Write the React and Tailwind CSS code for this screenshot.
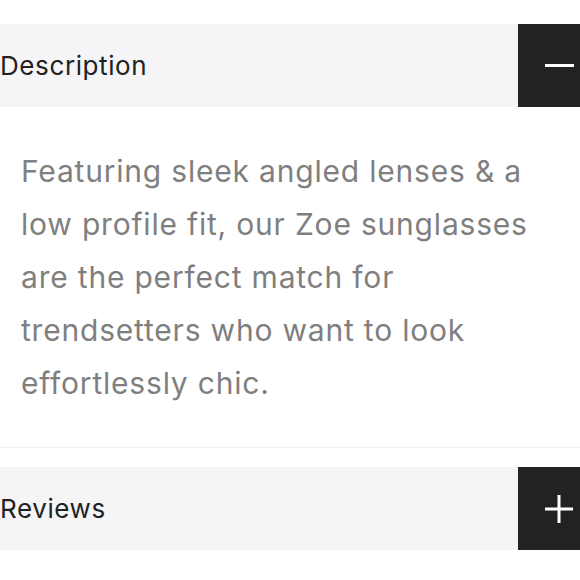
export default function App(){
  const font = { fontFamily: 'Inter, "Noto Sans", sans-serif' }
  return (
    <div className="w-[580px] h-[580px] bg-white overflow-hidden pt-6" style={font}>
      <div className="flex items-stretch h-[83px] bg-[#f5f5f7]">
        <div className="flex-1 flex items-center text-[26px] tracking-[0.6px] text-[#222222]">Description</div>
        <div className="w-[62px] bg-[#222222] flex items-center justify-end pr-[6px]">
          <span className="block w-[29px] h-[3px] bg-white"></span>
        </div>
      </div>
      <div className="px-[21px] pt-[38px] pb-[37px] border-b border-[#f0f0f0]">
        <p className="text-[30px] leading-[53px] tracking-[0.8px] text-[#7f7f7f] whitespace-nowrap">
          Featuring sleek angled lenses &amp; a<br />
          low profile fit, our Zoe sunglasses<br />
          are the perfect match for<br />
          trendsetters who want to look<br />
          effortlessly chic.
        </p>
      </div>
      <div className="mt-[19px] flex items-stretch h-[83px] bg-[#f5f5f7]">
        <div className="flex-1 flex items-center text-[26px] tracking-[0.6px] text-[#222222]">Reviews</div>
        <div className="w-[62px] bg-[#222222] flex items-center justify-end pr-[6px]">
          <svg width="30" height="30" viewBox="0 0 30 30">
            <path d="M15 1V29M1 15H29" stroke="white" strokeWidth="3" />
          </svg>
        </div>
      </div>
    </div>
  )
}
